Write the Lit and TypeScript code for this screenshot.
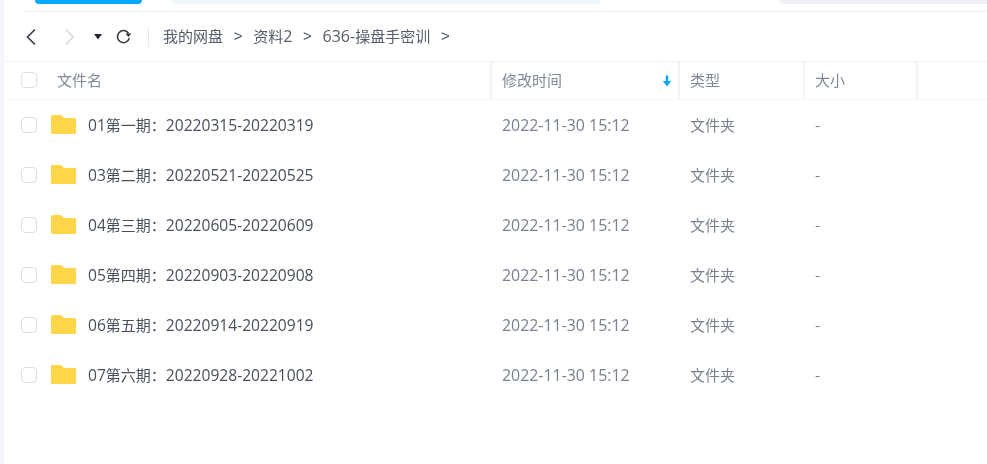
import { LitElement, html, css } from "lit";
import { customElement } from "lit/decorators.js";

const rows = [
  "01第一期\uFF1A20220315-20220319",
  "03第二期\uFF1A20220521-20220525",
  "04第三期\uFF1A20220605-20220609",
  "05第四期\uFF1A20220903-20220908",
  "06第五期\uFF1A20220914-20220919",
  "07第六期\uFF1A20220928-20221002",
];

const mix = (s: string) =>
  s.split(/([0-9:\- ]+)/).map((p, i) => (i % 2 ? html`<span class="n">${p}</span>` : p));

@customElement("app-root")
export class AppRoot extends LitElement {
  static styles = css`
    :host {
      display: block;
      width: 987px;
      height: 464px;
      overflow: hidden;
      background: #fff;
      font-family: "Noto Sans CJK SC", "Noto Sans", sans-serif;
      font-size: 15px;
      color: #4a505b;
    }
    .n { font-family: "Open Sans", sans-serif; font-size: 15.6px; }
    .crumbs .n { font-size: 16px; }
    .d { font-family: "Open Sans", sans-serif; font-size: 15.9px; }
    .page { display: flex; height: 464px; filter: blur(0.35px); }
    .rail { width: 4px; flex: none; background: #f4f6fb; }
    .main { flex: 1; min-width: 0; }
    .top { height: 4px; display: flex; }
    .blue { margin-left: 31px; width: 107px; background: #06a7ff; border-radius: 0 0 22px 22px; }
    .search { margin-left: 30px; width: 428px; background: #edf6fc; border-radius: 0 0 20px 20px; }
    .gray { margin-left: 180px; flex: 1; background: #eef0f6; border-radius: 0 0 0 14px; }
    .rule { margin: 7px 0 0 20px; height: 1px; background: #eceef2; }
    .toolbar { height: 49px; display: flex; align-items: center; border-bottom: 1px solid #f0f1f4; }
    .toolbar svg { display: block; flex: none; }
    .back { margin-left: 20px; }
    .fwd { margin-left: 24px; }
    .drop { margin-left: 18px; }
    .refresh { margin-left: 13px; }
    .sep { width: 1px; height: 20px; background: #e8e9ed; margin: 0 14px 0 16px; }
    .crumbs { display: flex; align-items: center; gap: 10.6px; color: #555c68; line-height: 20px; white-space: nowrap; padding-bottom: 2px; }
    .crumbs b { font-weight: 400; color: #454d5a; width: 9px; text-align: center; font-family: "Liberation Sans", sans-serif; }
    .head {
      height: 37px;
      display: grid;
      grid-template-columns: 488px 188px 125px 113px 1fr;
      border-bottom: 1px solid #f5f6f8;
      color: #818999;
      align-items: stretch;
    }
    .head > div { display: flex; align-items: center; padding: 0 0 3px 10px; border-right: 2px solid #f2f3f5; position: relative; }
    .head > div:last-child { border-right: 0; }
    .head .name { padding-left: 17px; border-right: 2px solid #f2f3f5; }
    .head .name span { margin-left: 20px; }
    .check { width: 16px; height: 16px; box-sizing: border-box; border: 1px solid #dcdee2; border-radius: 4px; background: #fff; flex: none; }
    .head .check { margin-top: 2px; }
    .sort { position: absolute; right: 6px; top: 13px; }
    .row {
      height: 50px;
      display: grid;
      grid-template-columns: 488px 188px 125px 1fr;
      align-items: center;
    }
    .row .cell { padding: 0 0 1px 10px; color: #7a818e; white-space: nowrap; }
    .row .file { display: flex; align-items: center; padding-left: 17px; color: #4a505b; white-space: nowrap; }
    .file svg { margin: 0 12px 2px 14px; display: block; flex: none; }
    .file span.t { padding-bottom: 1px; }
    .type { color: #6a717e; }
  `;

  render() {
    return html`
      <div class="page">
        <div class="rail"></div>
        <div class="main">
          <div class="top">
            <div class="blue"></div>
            <div class="search"></div>
            <div class="gray"></div>
          </div>
          <div class="rule"></div>
          <div class="toolbar">
            <svg class="back" width="14" height="18" viewBox="0 0 14 18"><path d="M11 1.5 3.5 9 11 16.5" fill="none" stroke="#3b4048" stroke-width="1.7"/></svg>
            <svg class="fwd" width="14" height="18" viewBox="0 0 14 18"><path d="M4 1.5 11 9l-7 7.5" fill="none" stroke="#d4d6da" stroke-width="1.5"/></svg>
            <svg class="drop" width="8" height="6" viewBox="0 0 8 6"><path d="M0 0h8L4 5.5z" fill="#25282e"/></svg>
            <svg class="refresh" width="17" height="17" viewBox="0 0 17 17"><path d="M13.4 5.2A6 6 0 1 0 14.3 10" fill="none" stroke="#33373e" stroke-width="1.5"/><path d="M10.6 5.6h5.6L13.4 9z" fill="#25282e"/></svg>
            <div class="sep"></div>
            <div class="crumbs">
              <span>我的网盘</span><b>&gt;</b><span>${mix("资料2")}</span><b>&gt;</b><span>${mix("636-操盘手密训")}</span><b>&gt;</b>
            </div>
          </div>
          <div class="head">
            <div class="name"><div class="check"></div><span>文件名</span></div>
            <div>修改时间
              <svg class="sort" width="10" height="12" viewBox="0 0 10 12"><path d="M5 0.5v7" stroke="#06a7ff" stroke-width="2.4"/><path d="M0.8 6h8.4L5 11.5z" fill="#06a7ff"/></svg>
            </div>
            <div>类型</div>
            <div>大小</div>
            <div></div>
          </div>
          ${rows.map(
            (r) => html`
              <div class="row">
                <div class="file">
                  <div class="check"></div>
                  <svg width="25" height="19" viewBox="0 0 25 19"><path d="M0 1.5A1.5 1.5 0 0 1 1.5 0h7.7c.6 0 1 .2 1.4.6L13 3h10.5A1.5 1.5 0 0 1 25 4.5v13a1.5 1.5 0 0 1-1.5 1.5h-22A1.5 1.5 0 0 1 0 17.5z" fill="#ffd54a"/></svg>
                  <span class="t">${mix(r)}</span>
                </div>
                <div class="cell"><span class="d">2022-11-30 15:12</span></div>
                <div class="cell type">文件夹</div>
                <div class="cell">-</div>
              </div>
            `
          )}
        </div>
      </div>
    `;
  }
}
